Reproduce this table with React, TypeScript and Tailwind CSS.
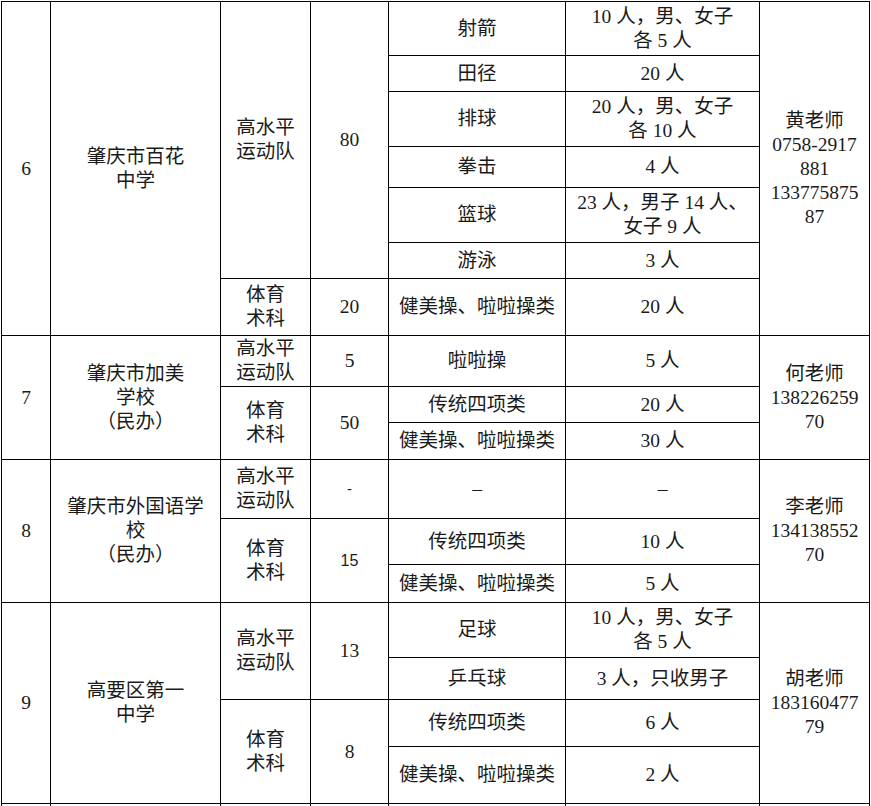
import React from "react";

const font = {
  fontFamily: '"Liberation Serif", "Noto Sans CJK SC", serif',
};

type CellProps = {
  children?: React.ReactNode;
  rowSpan?: number;
  className?: string;
};

function Cell({ children, rowSpan, className = "" }: CellProps) {
  return (
    <td
      rowSpan={rowSpan}
      className={`border border-black p-0 text-center align-middle ${className}`}
    >
      {children}
    </td>
  );
}

function Lines({ items }: { items: string[] }) {
  return (
    <>
      {items.map((t, i) => (
        <div key={i}>{t}</div>
      ))}
    </>
  );
}

export default function App() {
  return (
    <div className="h-[806px] w-[871px] overflow-hidden bg-white pl-px pt-px">
      <table
        className="w-[868px] table-fixed border-collapse text-[19.5px] leading-[24px] text-[#1a1a1a]"
        style={font}
      >
        <colgroup>
          <col className="w-[49px]" />
          <col className="w-[170px]" />
          <col className="w-[90px]" />
          <col className="w-[78px]" />
          <col className="w-[177px]" />
          <col className="w-[194px]" />
          <col className="w-[110px]" />
        </colgroup>
        <tbody>
          {/* 6 */}
          <tr className="h-[54px]">
            <Cell rowSpan={7}>6</Cell>
            <Cell rowSpan={7}>
              <Lines items={["肇庆市百花", "中学"]} />
            </Cell>
            <Cell rowSpan={6}>
              <Lines items={["高水平", "运动队"]} />
            </Cell>
            <Cell rowSpan={6}>80</Cell>
            <Cell>射箭</Cell>
            <Cell>
              <Lines items={["10 人，男、女子", "各 5 人"]} />
            </Cell>
            <Cell rowSpan={7}>
              <Lines items={["黄老师", "0758-2917", "881", "133775875", "87"]} />
            </Cell>
          </tr>
          <tr className="h-[36px]">
            <Cell>田径</Cell>
            <Cell>20 人</Cell>
          </tr>
          <tr className="h-[55px]">
            <Cell>排球</Cell>
            <Cell>
              <Lines items={["20 人，男、女子", "各 10 人"]} />
            </Cell>
          </tr>
          <tr className="h-[41px]">
            <Cell>拳击</Cell>
            <Cell>4 人</Cell>
          </tr>
          <tr className="h-[55px]">
            <Cell>篮球</Cell>
            <Cell>
              <Lines items={["23 人，男子 14 人、", "女子 9 人"]} />
            </Cell>
          </tr>
          <tr className="h-[36px]">
            <Cell>游泳</Cell>
            <Cell>3 人</Cell>
          </tr>
          <tr className="h-[57px]">
            <Cell>
              <Lines items={["体育", "术科"]} />
            </Cell>
            <Cell>20</Cell>
            <Cell>健美操、啦啦操类</Cell>
            <Cell>20 人</Cell>
          </tr>

          {/* 7 */}
          <tr className="h-[51px]">
            <Cell rowSpan={3}>7</Cell>
            <Cell rowSpan={3}>
              <Lines items={["肇庆市加美", "学校", "（民办）"]} />
            </Cell>
            <Cell>
              <Lines items={["高水平", "运动队"]} />
            </Cell>
            <Cell>5</Cell>
            <Cell>啦啦操</Cell>
            <Cell>5 人</Cell>
            <Cell rowSpan={3}>
              <Lines items={["何老师", "138226259", "70"]} />
            </Cell>
          </tr>
          <tr className="h-[36px]">
            <Cell rowSpan={2}>
              <Lines items={["体育", "术科"]} />
            </Cell>
            <Cell rowSpan={2}>50</Cell>
            <Cell>传统四项类</Cell>
            <Cell>20 人</Cell>
          </tr>
          <tr className="h-[37px]">
            <Cell>健美操、啦啦操类</Cell>
            <Cell>30 人</Cell>
          </tr>

          {/* 8 */}
          <tr className="h-[59px]">
            <Cell rowSpan={3}>8</Cell>
            <Cell rowSpan={3}>
              <Lines items={["肇庆市外国语学", "校", "（民办）"]} />
            </Cell>
            <Cell>
              <Lines items={["高水平", "运动队"]} />
            </Cell>
            <Cell className="font-['Liberation_Sans',sans-serif] text-[15px]">-</Cell>
            <Cell>–</Cell>
            <Cell>–</Cell>
            <Cell rowSpan={3}>
              <Lines items={["李老师", "134138552", "70"]} />
            </Cell>
          </tr>
          <tr className="h-[46px]">
            <Cell rowSpan={2}>
              <Lines items={["体育", "术科"]} />
            </Cell>
            <Cell rowSpan={2} className="font-['Liberation_Sans',sans-serif] text-[16px]">
              15
            </Cell>
            <Cell>传统四项类</Cell>
            <Cell>10 人</Cell>
          </tr>
          <tr className="h-[38px]">
            <Cell>健美操、啦啦操类</Cell>
            <Cell>5 人</Cell>
          </tr>

          {/* 9 */}
          <tr className="h-[55px]">
            <Cell rowSpan={4}>9</Cell>
            <Cell rowSpan={4}>
              <Lines items={["高要区第一", "中学"]} />
            </Cell>
            <Cell rowSpan={2}>
              <Lines items={["高水平", "运动队"]} />
            </Cell>
            <Cell rowSpan={2}>13</Cell>
            <Cell>足球</Cell>
            <Cell>
              <Lines items={["10 人，男、女子", "各 5 人"]} />
            </Cell>
            <Cell rowSpan={4}>
              <Lines items={["胡老师", "183160477", "79"]} />
            </Cell>
          </tr>
          <tr className="h-[42px]">
            <Cell>乒乓球</Cell>
            <Cell>3 人，只收男子</Cell>
          </tr>
          <tr className="h-[47px]">
            <Cell rowSpan={2}>
              <Lines items={["体育", "术科"]} />
            </Cell>
            <Cell rowSpan={2}>8</Cell>
            <Cell>传统四项类</Cell>
            <Cell>6 人</Cell>
          </tr>
          <tr className="h-[57px]">
            <Cell>健美操、啦啦操类</Cell>
            <Cell>2 人</Cell>
          </tr>
          <tr className="h-[20px]">
            <Cell />
            <Cell />
            <Cell />
            <Cell />
            <Cell />
            <Cell />
            <Cell />
          </tr>
        </tbody>
      </table>
    </div>
  );
}
